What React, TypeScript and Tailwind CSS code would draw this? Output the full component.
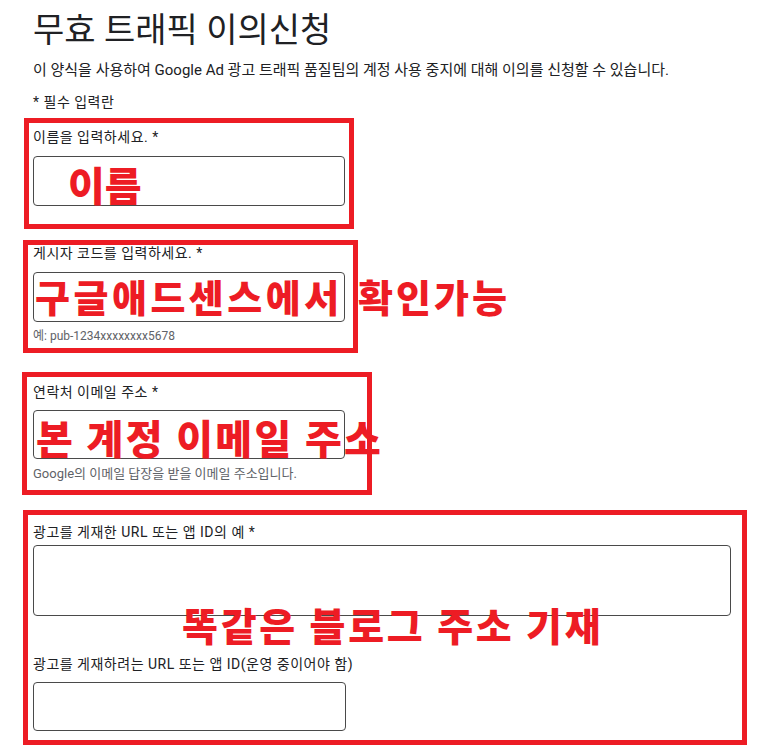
import React from 'react';

const body = "font-['Roboto','Noto_Sans_CJK_KR',sans-serif]";
const mark = "absolute font-['Noto_Sans_CJK_KR',sans-serif] font-black text-[#ed1c24] whitespace-nowrap";
const label = 'block text-[14px] tracking-[0.5px]';

function Field({ className = '', height }: { className?: string; height: string }) {
  return <div className={`${height} ${className} rounded-[4px] border border-[#4a4a4a] bg-white`} />;
}

export default function App() {
  return (
    <div className={`relative w-[774px] h-[754px] overflow-hidden bg-white text-[#202124] ${body}`}>
      <div className="pl-[33px] pt-[10px]">
        <h1 className="text-[34px] leading-[40px] font-normal">무효 트래픽 이의신청</h1>
        <p className="mt-[10px] text-[15px] leading-[20px]">
          이 양식을 사용하여 Google Ad 광고 트래픽 품질팀의 계정 사용 중지에 대해 이의를 신청할 수 있습니다.
        </p>
        <p className="mt-[13px] text-[14px] leading-[18px] tracking-[0.5px]">* 필수 입력란</p>
      </div>

      {/* name */}
      <div className="mt-[7px] ml-[24px] w-[330px] h-[111px] border-[5px] border-[#ed1c24] pl-[4px] pt-[5px]">
        <label className={`${label} leading-[18px]`}>이름을 입력하세요. *</label>
        <Field height="h-[50px]" className="mt-[10px] w-[312px]" />
      </div>

      {/* publisher code */}
      <div className="mt-[11px] ml-[23px] w-[335px] h-[113px] border-[5px] border-[#ed1c24] pl-[5px]">
        <label className={`${label} leading-[16px]`}>게시자 코드를 입력하세요. *</label>
        <Field height="h-[50px]" className="mt-[11px] w-[312px]" />
        <p className="mt-[6px] text-[12px] leading-[16px] text-[#5f6368]">예: pub-1234xxxxxxxx5678</p>
      </div>

      {/* email */}
      <div className="mt-[19px] ml-[22px] w-[350px] h-[123px] border-[5px] border-[#ed1c24] pl-[6px] pt-[6px]">
        <label className={`${label} leading-[18px]`}>연락처 이메일 주소 *</label>
        <Field height="h-[49px]" className="mt-[9px] w-[312px]" />
        <p className="mt-[7px] text-[13px] leading-[16px] text-[#5f6368]">Google의 이메일 답장을 받을 이메일 주소입니다.</p>
      </div>

      {/* urls */}
      <div className="mt-[15px] ml-[23px] w-[724px] h-[235px] border-[5px] border-[#ed1c24] pl-[5px] pt-[8px]">
        <label className={`${label} leading-[18px]`}>광고를 게재한 URL 또는 앱 ID의 예 *</label>
        <Field height="h-[71px]" className="mt-[4px] w-[698px]" />
        <label className={`${label} mt-[39px] leading-[18px]`}>광고를 게재하려는 URL 또는 앱 ID(운영 중이어야 함)</label>
        <Field height="h-[49px]" className="mt-[9px] w-[313px]" />
      </div>

      {/* red notes over the form */}
      <span className={`${mark} left-[68px] top-[164px] text-[40px] leading-[40px]`}>이름</span>
      <span className={`${mark} left-[35px] top-[277px] text-[38px] leading-[38px] tracking-[3.5px]`}>구글애드센스에서</span>
      <span className={`${mark} left-[358px] top-[277px] text-[38px] leading-[38px] tracking-[3px]`}>확인가능</span>
      <span className={`${mark} left-[36px] top-[417px] text-[40px] leading-[40px] tracking-[2.3px]`}>본 계정 이메일 주소</span>
      <span className={`${mark} left-[182px] top-[605px] text-[39px] leading-[39px] tracking-[2.75px]`}>똑같은 블로그 주소 기재</span>
    </div>
  );
}
